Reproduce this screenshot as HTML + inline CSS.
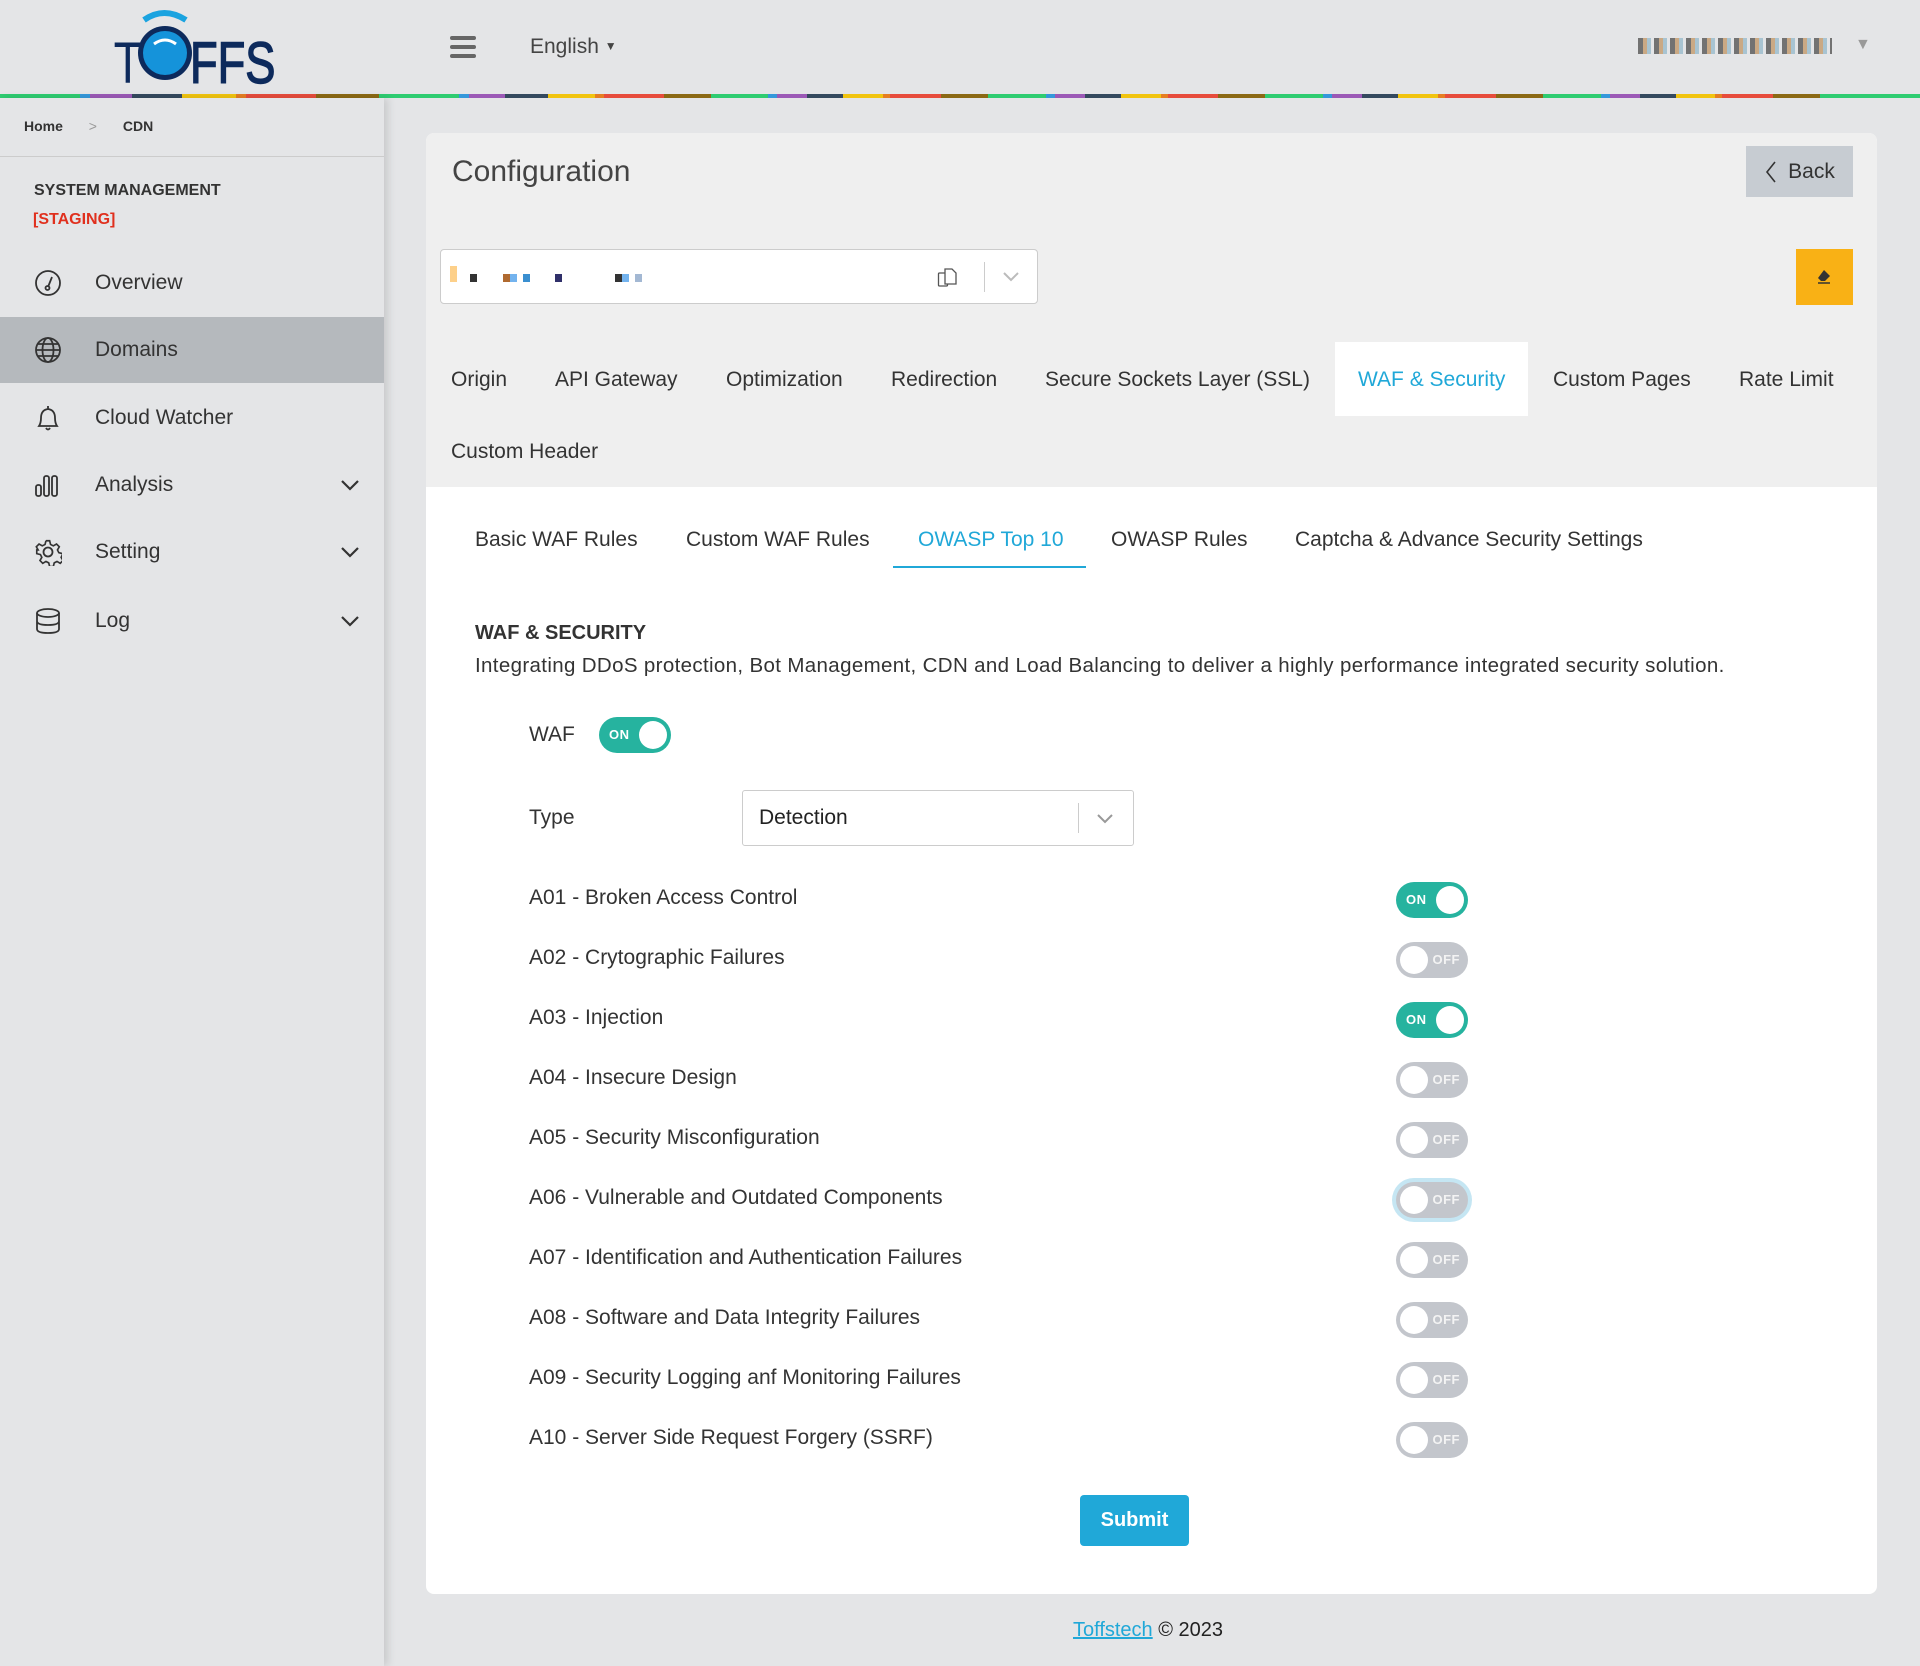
<!DOCTYPE html>
<html><head><meta charset="utf-8"><style>
*{box-sizing:border-box;margin:0;padding:0}
body{width:1920px;height:1666px;background:#e4e5e7;font-family:"Liberation Sans",Arial,sans-serif;color:#333;position:relative;overflow:hidden}
.abs{position:absolute}
.cline{position:absolute;left:0;top:94px;width:1920px;height:4px;display:flex}
.cline span{height:4px}
.side{position:absolute;left:0;top:98px;width:384px;height:1568px;background:#e4e5e7;box-shadow:4px 0 8px rgba(0,0,0,.12)}
.menu{position:absolute;left:0;width:384px;height:66px;display:flex;align-items:center;font-size:21px;color:#333}
.menu svg{position:absolute;left:34px}
.menu .t{position:absolute;left:95px}
.menu .ch{position:absolute;left:340px}
.card{position:absolute;left:426px;top:133px;width:1451px;height:1461px;background:#fff;border-radius:8px;overflow:hidden}
.top{position:absolute;left:0;top:0;width:100%;height:354px;background:#efefef}
.tab{position:absolute;font-size:21px;color:#333;white-space:nowrap}
.tog{position:absolute;width:72px;height:36px;border-radius:18px}
.tog.on{background:#26b39f}
.tog.off{background:#c3c6cc}
.tog i{position:absolute;top:4px;width:28px;height:28px;border-radius:50%;background:#fff}
.tog.on i{right:4px}.tog.off i{left:4px}
.tog b{position:absolute;top:10px;font-size:13px;color:#fff;font-weight:bold;letter-spacing:.5px}
.tog.on b{left:10px}.tog.off b{right:8px;color:#f3f3f3}
.row{position:absolute;left:529px;font-size:21px;color:#333}
</style></head><body>
<div class="abs" style="left:112px;top:8px;width:170px;height:80px">
<svg width="170" height="80" viewBox="0 0 170 80">
<path d="M32 12 Q52 -2 74 12" stroke="#1aa3e0" stroke-width="6" fill="none"/>
<circle cx="53" cy="45" r="27" fill="#0d2a5c"/><circle cx="53" cy="45" r="22" fill="#1593da"/>
<path d="M42 36 Q53 28 64 36" stroke="#fff" stroke-width="3" fill="none"/>
<text x="2" y="75" font-family="Liberation Sans" font-size="58" fill="#0d2a5c" transform="scale(0.8,1)">T</text>
<text x="100" y="75" font-family="Liberation Sans" font-size="58" fill="#0d2a5c" stroke="#0d2a5c" stroke-width="1.5" transform="scale(0.78,1)" >FFS</text>
</svg></div>
<div class="abs" style="left:450px;top:36px;width:26px;height:22px">
<div style="height:4px;background:#666;margin-bottom:5px;border-radius:2px"></div><div style="height:4px;background:#666;margin-bottom:5px;border-radius:2px"></div><div style="height:4px;background:#666;border-radius:2px"></div></div>
<div class="abs" style="left:530px;top:35px;font-size:21px;color:#444">English <span style="font-size:12px;position:relative;top:-3px">▼</span></div>
<div class="abs" style="left:1638px;top:38px;width:194px;height:16px;background:repeating-linear-gradient(90deg,#555 0 5px,#c49a6c 5px 9px,#9bc 9px 13px,#e4e5e7 13px 16px);opacity:.8"></div>
<div class="abs" style="left:1855px;top:36px;font-size:16px;color:#999">▼</div>
<div class="cline">
<span style="width:80px;background:#2ecc71"></span><span style="width:10px;background:#3498db"></span><span style="width:42px;background:#9b59b6"></span><span style="width:50px;background:#34495e"></span><span style="width:54px;background:#f1c40f"></span><span style="width:11px;background:#e67e22"></span><span style="width:70px;background:#e74c3c"></span><span style="width:63px;background:#8b6914"></span><span style="width:80px;background:#2ecc71"></span><span style="width:10px;background:#3498db"></span><span style="width:36px;background:#9b59b6"></span><span style="width:43px;background:#34495e"></span><span style="width:47px;background:#f1c40f"></span><span style="width:9px;background:#e67e22"></span><span style="width:60px;background:#e74c3c"></span><span style="width:47px;background:#8b6914"></span><span style="width:58px;background:#2ecc71"></span><span style="width:9px;background:#3498db"></span><span style="width:30px;background:#9b59b6"></span><span style="width:36px;background:#34495e"></span><span style="width:40px;background:#f1c40f"></span><span style="width:7px;background:#e67e22"></span><span style="width:51px;background:#e74c3c"></span><span style="width:47px;background:#8b6914"></span><span style="width:58px;background:#2ecc71"></span><span style="width:9px;background:#3498db"></span><span style="width:30px;background:#9b59b6"></span><span style="width:36px;background:#34495e"></span><span style="width:40px;background:#f1c40f"></span><span style="width:7px;background:#e67e22"></span><span style="width:51px;background:#e74c3c"></span><span style="width:47px;background:#8b6914"></span><span style="width:58px;background:#2ecc71"></span><span style="width:9px;background:#3498db"></span><span style="width:30px;background:#9b59b6"></span><span style="width:36px;background:#34495e"></span><span style="width:40px;background:#f1c40f"></span><span style="width:7px;background:#e67e22"></span><span style="width:51px;background:#e74c3c"></span><span style="width:47px;background:#8b6914"></span><span style="width:58px;background:#2ecc71"></span><span style="width:9px;background:#3498db"></span><span style="width:30px;background:#9b59b6"></span><span style="width:36px;background:#34495e"></span><span style="width:40px;background:#f1c40f"></span><span style="width:7px;background:#e67e22"></span><span style="width:51px;background:#e74c3c"></span><span style="width:47px;background:#8b6914"></span><span style="width:100px;background:#2ecc71"></span>
</div>
<div class="side">
<div class="abs" style="left:24px;top:20px;font-size:14px;font-weight:bold;color:#333">Home <span style="color:#999;font-weight:normal;margin:0 22px">&gt;</span> CDN</div>
<div class="abs" style="left:0;top:58px;width:384px;height:1px;background:#ccc"></div>
<div class="abs" style="left:34px;top:84px;font-size:16px;font-weight:bold;color:#333">SYSTEM MANAGEMENT</div>
<div class="abs" style="left:33px;top:113px;font-size:16px;font-weight:bold;color:#e0301e">[STAGING]</div>
</div>
<div class="menu" style="top:250px"><svg width="28" height="28" viewBox="0 0 28 28" fill="none" stroke="#333" stroke-width="1.8"><circle cx="14" cy="14" r="12"/><path d="M14 18 L18 8"/><circle cx="13.5" cy="19" r="2"/></svg><span class="t">Overview</span></div>
<div class="menu" style="top:317px;background:#b5b9bd"><svg width="28" height="28" viewBox="0 0 28 28" fill="none" stroke="#333" stroke-width="1.8"><circle cx="14" cy="14" r="12"/><ellipse cx="14" cy="14" rx="5.5" ry="12"/><path d="M2 14h24M4 8h20M4 20h20"/></svg><span class="t">Domains</span></div>
<div class="menu" style="top:385px"><svg width="28" height="28" viewBox="0 0 28 28" fill="none" stroke="#333" stroke-width="1.8"><path d="M5 22 Q7 19 7 14 Q7 6 14 5 Q21 6 21 14 Q21 19 23 22Z M12 24 Q14 27 16 24 M14 2v3"/></svg><span class="t">Cloud Watcher</span></div>
<div class="menu" style="top:452px"><svg width="28" height="28" viewBox="0 0 28 28" fill="none" stroke="#333" stroke-width="1.8"><rect x="2" y="14" width="5" height="11" rx="2"/><rect x="10" y="5" width="5" height="20" rx="2"/><rect x="18" y="5" width="5" height="20" rx="2"/></svg><span class="t">Analysis</span><svg class="ch" style="left:340px" width="20" height="12" viewBox="0 0 20 12" fill="none" stroke="#333" stroke-width="2.2"><path d="M2 2l8 8 8-8"/></svg></div>
<div class="menu" style="top:519px"><svg width="28" height="28" viewBox="0 0 28 28" fill="none" stroke="#333" stroke-width="1.8"><path d="M12 2h4l1 4 3 1.5 3.5-2 3 3-2 3.5 1.5 3 4 1v0 M12 2l-1 4-3 1.5-3.5-2-3 3 2 3.5L2 12v4l4 1 1.5 3-2 3.5 3 3 3.5-2 3 1.5 1 4h4l1-4 3-1.5 3.5 2 3-3-2-3.5 1.5-3 4-1v-4" transform="scale(.92) translate(1,1)"/><circle cx="14" cy="14" r="4.5"/></svg><span class="t">Setting</span><svg class="ch" style="left:340px" width="20" height="12" viewBox="0 0 20 12" fill="none" stroke="#333" stroke-width="2.2"><path d="M2 2l8 8 8-8"/></svg></div>
<div class="menu" style="top:588px"><svg width="28" height="28" viewBox="0 0 28 28" fill="none" stroke="#333" stroke-width="1.8"><ellipse cx="14" cy="6" rx="11" ry="4"/><path d="M3 6v16q0 4 11 4t11-4V6M3 14q0 4 11 4t11-4"/></svg><span class="t">Log</span><svg class="ch" style="left:340px" width="20" height="12" viewBox="0 0 20 12" fill="none" stroke="#333" stroke-width="2.2"><path d="M2 2l8 8 8-8"/></svg></div>

<div class="card">
<div class="top"></div>
<div class="abs" style="left:26px;top:22px;font-size:30px;color:#444">Configuration</div>
<div class="abs" style="left:1320px;top:13px;width:107px;height:51px;background:#c7ccd2;font-size:21px;color:#333;display:flex;align-items:center;justify-content:center"><svg width="14" height="24" viewBox="0 0 14 24" fill="none" stroke="#333" stroke-width="1.6" style="margin-right:10px"><path d="M11 2L3 12l8 10"/></svg>Back</div>
<div class="abs" style="left:14px;top:116px;width:598px;height:55px;background:#fff;border:1px solid #ccc;border-radius:4px">
<div class="abs" style="left:9px;top:16px;width:7px;height:16px;background:#fdd08a"></div>
<div class="abs" style="left:29px;top:24px;width:7px;height:8px;background:#333"></div>
<div class="abs" style="left:62px;top:24px;width:14px;height:8px;background:linear-gradient(90deg,#b06a30 50%,#73b3ee 50%)"></div>
<div class="abs" style="left:82px;top:24px;width:7px;height:8px;background:#3a8fd0"></div>
<div class="abs" style="left:114px;top:24px;width:7px;height:8px;background:#30306a"></div>
<div class="abs" style="left:174px;top:24px;width:14px;height:8px;background:linear-gradient(90deg,#333 50%,#73b3ee 50%)"></div>
<div class="abs" style="left:194px;top:24px;width:7px;height:8px;background:#a3b8d3"></div>
<svg class="abs" style="left:496px;top:16px" width="22" height="22" viewBox="0 0 22 22" fill="none" stroke="#555" stroke-width="1.3"><rect x="1.5" y="7" width="9" height="13" rx="1"/><path d="M8 3h7l4 4v11h-11z" fill="#fff"/></svg>
<div class="abs" style="left:543px;top:12px;width:1px;height:30px;background:#ccc"></div>
<svg class="abs" style="left:561px;top:21px" width="18" height="12" viewBox="0 0 18 12" fill="none" stroke="#bbb" stroke-width="2"><path d="M2 2l7 7 7-7"/></svg>
</div>
<div class="abs" style="left:1370px;top:116px;width:57px;height:56px;background:#f9b115;display:flex;align-items:center;justify-content:center"><svg width="18" height="16" viewBox="0 0 18 16"><path d="M8 1l6 6-5 5H5L2 9z" fill="#333"/><path d="M2 14h12" stroke="#333" stroke-width="1.5"/></svg></div>

<div class="abs" style="left:909px;top:209px;width:193px;height:74px;background:#fff"></div>
<div class="tab" style="left:25px;top:235px">Origin</div>
<div class="tab" style="left:129px;top:235px">API Gateway</div>
<div class="tab" style="left:300px;top:235px">Optimization</div>
<div class="tab" style="left:465px;top:235px">Redirection</div>
<div class="tab" style="left:619px;top:235px">Secure Sockets Layer (SSL)</div>
<div class="tab" style="left:932px;top:235px;color:#20a8d8">WAF &amp; Security</div>
<div class="tab" style="left:1127px;top:235px">Custom Pages</div>
<div class="tab" style="left:1313px;top:235px">Rate Limit</div>
<div class="tab" style="left:25px;top:307px">Custom Header</div>

<div class="tab" style="left:49px;top:395px">Basic WAF Rules</div>
<div class="tab" style="left:260px;top:395px">Custom WAF Rules</div>
<div class="tab" style="left:492px;top:395px;color:#20a8d8">OWASP Top 10</div>
<div class="abs" style="left:467px;top:433px;width:193px;height:2px;background:#20a8d8"></div>
<div class="tab" style="left:685px;top:395px">OWASP Rules</div>
<div class="tab" style="left:869px;top:395px">Captcha &amp; Advance Security Settings</div>

<div class="abs" style="left:49px;top:489px;font-size:20px;font-weight:bold;color:#333">WAF &amp; SECURITY</div>
<div class="abs" style="left:49px;top:521px;font-size:20.5px;letter-spacing:.35px;color:#333;white-space:nowrap">Integrating DDoS protection, Bot Management, CDN and Load Balancing to deliver a highly performance integrated security solution.</div>
<div class="abs" style="left:103px;top:590px;font-size:21px">WAF</div>
<div class="tog on" style="left:173px;top:584px"><b>ON</b><i></i></div>
<div class="abs" style="left:103px;top:673px;font-size:21px">Type</div>
<div class="abs" style="left:316px;top:657px;width:392px;height:56px;border:1px solid #ccc;border-radius:3px;background:#fff">
<div class="abs" style="left:16px;top:15px;font-size:21px;color:#222">Detection</div>
<div class="abs" style="left:335px;top:12px;width:1px;height:30px;background:#ccc"></div>
<svg class="abs" style="left:353px;top:22px" width="18" height="12" viewBox="0 0 18 12" fill="none" stroke="#999" stroke-width="2"><path d="M2 2l7 7 7-7"/></svg>
</div>
</div>
<div class="row" style="top:886px">A01 - Broken Access Control</div>
<div class="row" style="top:946px">A02 - Crytographic Failures</div>
<div class="row" style="top:1006px">A03 - Injection</div>
<div class="row" style="top:1066px">A04 - Insecure Design</div>
<div class="row" style="top:1126px">A05 - Security Misconfiguration</div>
<div class="row" style="top:1186px">A06 - Vulnerable and Outdated Components</div>
<div class="row" style="top:1246px">A07 - Identification and Authentication Failures</div>
<div class="row" style="top:1306px">A08 - Software and Data Integrity Failures</div>
<div class="row" style="top:1366px">A09 - Security Logging anf Monitoring Failures</div>
<div class="row" style="top:1426px">A10 - Server Side Request Forgery (SSRF)</div>
<div class="tog on" style="left:1396px;top:882px"><b>ON</b><i></i></div>
<div class="tog off" style="left:1396px;top:942px"><b>OFF</b><i></i></div>
<div class="tog on" style="left:1396px;top:1002px"><b>ON</b><i></i></div>
<div class="tog off" style="left:1396px;top:1062px"><b>OFF</b><i></i></div>
<div class="tog off" style="left:1396px;top:1122px"><b>OFF</b><i></i></div>
<div class="tog off" style="left:1396px;top:1182px;box-shadow:0 0 0 4px #c5e6f3"><b>OFF</b><i></i></div>
<div class="tog off" style="left:1396px;top:1242px"><b>OFF</b><i></i></div>
<div class="tog off" style="left:1396px;top:1302px"><b>OFF</b><i></i></div>
<div class="tog off" style="left:1396px;top:1362px"><b>OFF</b><i></i></div>
<div class="tog off" style="left:1396px;top:1422px"><b>OFF</b><i></i></div>
<div class="abs" style="left:1080px;top:1495px;width:109px;height:51px;background:#20a8d8;border-radius:4px;color:#fff;font-size:20px;font-weight:bold;display:flex;align-items:center;justify-content:center">Submit</div>
<div class="abs" style="left:1073px;top:1619px;font-size:20px;color:#222"><span style="color:#20a8d8;text-decoration:underline">Toffstech</span> © 2023</div>
</body></html>
